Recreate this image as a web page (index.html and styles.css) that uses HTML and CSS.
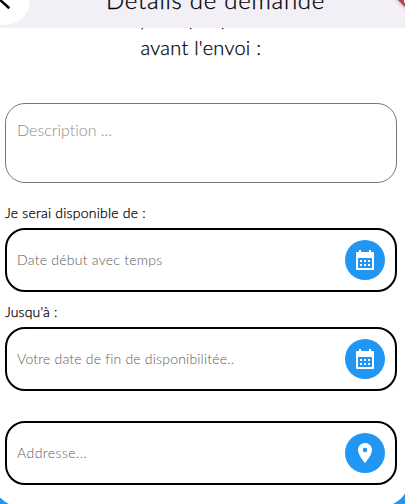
FILE: index.html
```html
<!DOCTYPE html>
<html lang="fr">
<head>
<meta charset="utf-8">
<title>Détails de demande</title>
<link rel="stylesheet" href="styles.css">
</head>
<body>
<header class="bar">
  <div class="back"><svg width="17" height="17" viewBox="0 0 17 17"><path d="M-1-1 9.300 8.300" fill="none" stroke="#000" stroke-width="2.500"/></svg></div>
  <h1 class="title">Détails de demande</h1>
  <svg class="ribbon" width="40" height="28" viewBox="0 0 40 28">
    <defs><filter id="soft" x="-50%" y="-50%" width="200%" height="200%"><feGaussianBlur stdDeviation="2.5"/></filter></defs>
    <path d="M31-4 44 9V-4Z" fill="#000" opacity=".65" filter="url(#soft)"/>
    <path d="M33 0 40 7V0Z" fill="#b9474b"/>
    <path d="M39 0v2l1 1V0Z" fill="#fff"/>
  </svg>
</header>
<main class="sheet">
  <p class="intro"><span class="intro-first">le plus que possible</span><span class="intro-last">avant l'envoi :</span></p>
  <div class="field area"><span class="hint description">Description ...</span></div>
  <p class="label from">Je serai disponible de :</p>
  <div class="field">
    <span class="hint start">Date début avec temps</span>
    <span class="dot"><svg width="24" height="24" viewBox="0 0 24 24"><path fill="#fff" fill-rule="evenodd" d="M6 2h2v2h8V2h2v2h2Q21 4 21 5V21Q21 22 20 22H4Q3 22 3 21V5Q3 4 4 4H6ZM5 10V20H19V10Z"/><path fill="#fff" d="M7 12h2v2H7zM11 12h2v2h-2zM15 12h2v2h-2zM7 16h2v2H7zM11 16h2v2h-2zM15 16h2v2h-2z"/></svg></span>
  </div>
  <p class="label until">Jusqu'à :</p>
  <div class="field">
    <span class="hint end">Votre date de fin de disponibilitée..</span>
    <span class="dot"><svg width="24" height="24" viewBox="0 0 24 24"><path fill="#fff" fill-rule="evenodd" d="M6 2h2v2h8V2h2v2h2Q21 4 21 5V21Q21 22 20 22H4Q3 22 3 21V5Q3 4 4 4H6ZM5 10V20H19V10Z"/><path fill="#fff" d="M7 12h2v2H7zM11 12h2v2h-2zM15 12h2v2h-2zM7 16h2v2H7zM11 16h2v2h-2zM15 16h2v2h-2z"/></svg></span>
  </div>
  <div class="field place">
    <span class="hint address">Addresse...</span>
    <span class="dot"><svg width="24" height="24" viewBox="0 0 24 24"><path fill="#fff" d="M12 2C8.130 2 5 5.130 5 9c0 5.250 7 13 7 13s7-7.750 7-13c0-3.870-3.130-7-7-7zm0 9.300a2.300 2.300 0 1 1 0-4.600 2.300 2.300 0 0 1 0 4.600z"/></svg></span>
  </div>
</main>
</body>
</html>
```
FILE: styles.css
```css
* { box-sizing: border-box; }
body {
  margin: 0;
  height: 504px;
  overflow: hidden;
  display: flex;
  flex-direction: column;
  background: #2196f3;
  color: #000;
  font-family: Lato, "Open Sans", sans-serif;
  font-weight: 300;
  font-variant-ligatures: none;
  white-space: nowrap;
}
.bar {
  position: relative;
  z-index: 1;
  flex: none;
  display: flex;
  height: 28px;
  overflow: hidden;
  background: #f2eff7;
}
.back {
  flex: none;
  width: 50px;
  height: 50px;
  margin: -25px 0 0 -20px;
  padding: 25px 0 0 20px;
  border-radius: 50%;
  background: #fff;
}
.back svg { display: block; }
.title {
  margin: -15px 0 0 76px;
  font-size: 24px;
  line-height: 30px;
  font-weight: 300;
  letter-spacing: .75px;
  -webkit-text-stroke: .3px #000;
}
.ribbon { position: absolute; top: 0; right: 0; }
.sheet {
  flex: none;
  height: 479px;
  margin: 0 -5px 0 -8px;
  padding: 0 13px;
  border-radius: 0 0 30px 30px;
  background: #fff;
}
.intro {
  display: flex;
  flex-direction: column;
  align-items: flex-start;
  height: 75px;
  margin: 0;
  font-size: 20px;
  line-height: 27px;
  -webkit-text-stroke: .25px #000;
}
.intro-first { margin: -23px 0 2px 114px; letter-spacing: .25px; }
.intro-last { margin-left: 135.500px; letter-spacing: .25px; }
.field {
  display: flex;
  align-items: center;
  justify-content: space-between;
  width: 392px;
  height: 64px;
  padding: 0 10px;
  border: 2px solid #000;
  border-radius: 20px;
}
.area {
  align-items: flex-start;
  height: 80px;
  padding: 15px 11px;
  border: 1px solid #77767e;
}
.place { margin-top: 30px; }
.hint {
  color: #5a5a5a;
  font-size: 14px;
  line-height: 22px;
}
.description { color: #8c8c8c; font-size: 16px; letter-spacing: 0; }
.start { letter-spacing: .25px; }
.end { letter-spacing: .2px; }
.address { letter-spacing: .45px; }
.label {
  height: 20px;
  margin: 0;
  font-size: 14px;
  line-height: 20px;
  -webkit-text-stroke: .25px #000;
}
.from { margin: 20px 0 5px; letter-spacing: .22px; }
.until { margin: 10px 0 5px; letter-spacing: .15px; }
.dot {
  display: grid;
  place-items: center;
  width: 40px;
  height: 40px;
  border-radius: 50%;
  background: #2196f3;
}
.dot svg { display: block; }
```
